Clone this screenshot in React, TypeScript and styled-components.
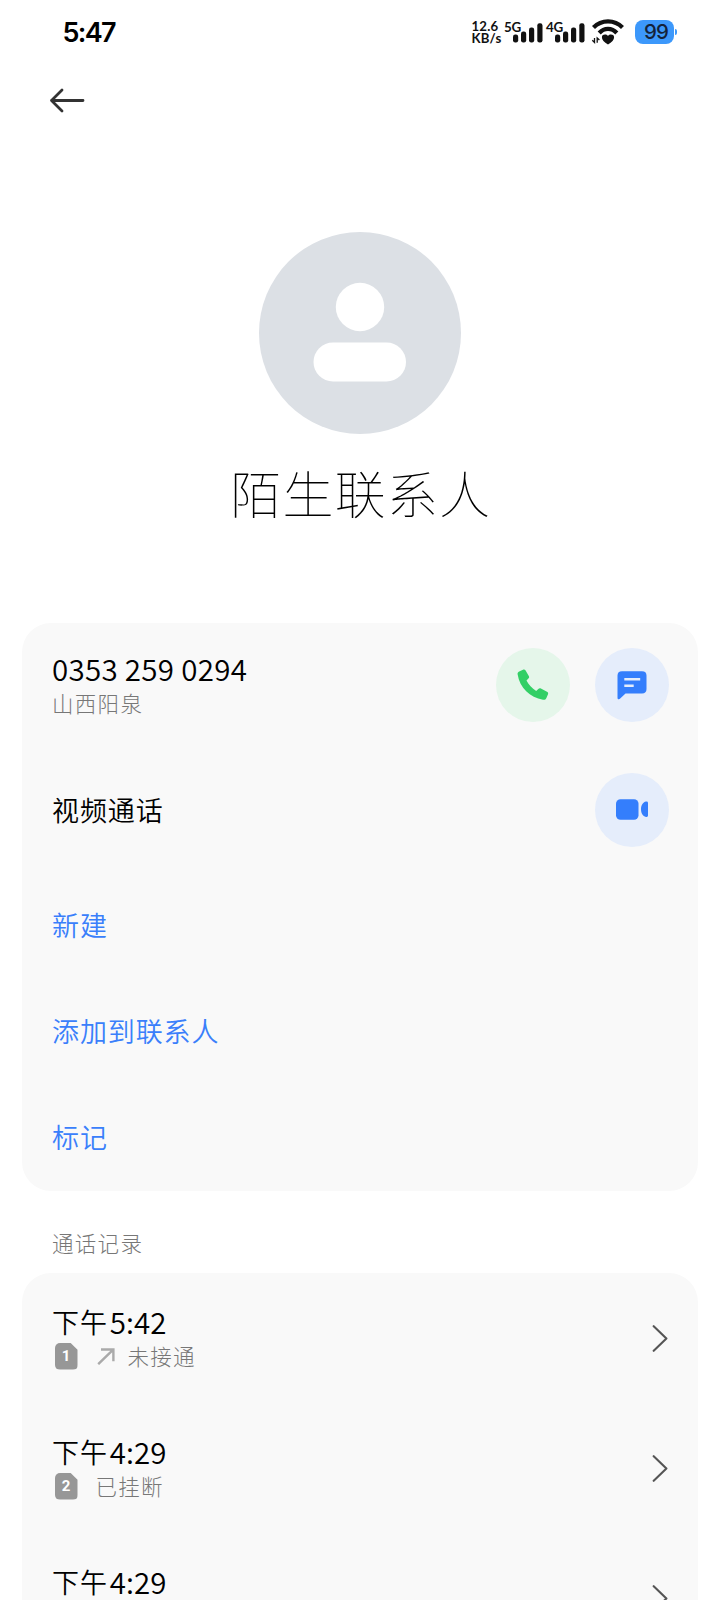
import React from "react";
import styled, { createGlobalStyle } from "styled-components";

const GlobalStyle = createGlobalStyle`
  * { box-sizing: border-box; }
  html, body { margin: 0; padding: 0; background: #fff; }
  body { height: 1600px; overflow: hidden; }
  svg { display: block; flex: none; }
  h1, h2, p { margin: 0; font-weight: inherit; }
`;

const cjk = `"Noto Sans CJK SC", sans-serif`;

const Screen = styled.main`
  width: 720px;
  height: 1600px;
  overflow: hidden;
  display: flex;
  flex-direction: column;
  background: #fff;
  color: #000;
  font-family: ${cjk};

  & > * { flex: none; }
`;

const StatusBar = styled.header`
  display: flex;
  align-items: center;
  height: 64px;
  padding: 0 43px 0 62.5px;
`;

const Clock = styled.span`
  flex: 1;
  padding-top: 1px;
  font: 600 27px/40px Inter, sans-serif;
  letter-spacing: -1.7px;
`;

const NetSpeed = styled.div`
  width: 32.5px;
  font: 700 13.2px/12.5px Lato, sans-serif;
  letter-spacing: 0.2px;
  white-space: nowrap;
  color: #111;

  span { display: block; }
`;

const Signal = styled.div`
  display: flex;
  align-items: flex-end;
  width: 42px;
  height: 23px;
`;

const SignalLabel = styled.span`
  width: 8px;
  height: 23px;
  font: 700 13.4px/12px Lato, sans-serif;
  letter-spacing: -0.3px;
  color: #111;
`;

const WifiSlot = styled.div`
  margin: 0 10px 0 3px;
`;

const Battery = styled.div`
  display: flex;
  align-items: center;
`;

const BatteryBody = styled.div`
  width: 39px;
  height: 24px;
  padding-left: 3px;
  border-radius: 8px;
  background: #3c98fb;
  color: #14233a;
  text-align: center;
  font: 500 20.5px/24px Inter, sans-serif;
  letter-spacing: -0.8px;
`;

const BatteryTip = styled.i`
  width: 2px;
  height: 6px;
  margin-left: 1px;
  border-radius: 0 2px 2px 0;
  background: #3c98fb;
`;

const TopBar = styled.nav`
  height: 168px;
  padding: 24px 0 0 49px;
`;

const Profile = styled.section`
  display: flex;
  flex-direction: column;
  align-items: center;
  height: 391px;
`;

const Name = styled.h1`
  margin-top: 21.5px;
  padding-left: 1.5px;
  font-size: 51px;
  line-height: 72px;
  font-weight: 100;
  letter-spacing: 1.2px;
`;

const Card = styled.section`
  margin: 0 22px;
  padding: 0 29.5px 0 30px;
  border-radius: 29px;
  background: #f9f9f9;
`;

const Row = styled.div<{ $height: number }>`
  display: flex;
  align-items: center;
  height: ${(p) => p.$height}px;
`;

const RowText = styled.div`
  flex: 1;
`;

const PhoneNumber = styled.p`
  font: 350 29.5px/34px ${cjk};
  letter-spacing: 0.3px;
  margin-bottom: 2px;
`;

const Label = styled.p<{ $link?: boolean }>`
  flex: 1;
  font-size: 27px;
  line-height: 40px;
  font-weight: 350;
  letter-spacing: 0.9px;
  color: ${(p) => (p.$link ? "#3a7ffb" : "#000")};
`;

const Muted = styled.p`
  font-size: 21.5px;
  line-height: 32px;
  font-weight: 300;
  letter-spacing: 1.3px;
  color: #777;
`;

const SectionTitle = styled.h2`
  height: 82.5px;
  padding: 36px 0 0 52px;
  font-size: 21.5px;
  line-height: 32px;
  font-weight: 300;
  letter-spacing: 1.3px;
  color: #777;
`;

const RoundButton = styled.button<{ $tone: "green" | "blue" }>`
  display: flex;
  align-items: center;
  justify-content: center;
  width: 74px;
  height: 74px;
  margin: 0 0 0 25px;
  padding: 0;
  border: 0;
  border-radius: 50%;
  background: ${(p) => (p.$tone === "green" ? "#e5f6ea" : "#e5edfb")};
`;

const CallTime = styled.p`
  display: flex;
  font-size: 27px;
  line-height: 36px;
  font-weight: 350;
  letter-spacing: 0.9px;
`;

const Digits = styled.span`
  margin-left: 2px;
  font: 350 29.5px/34px ${cjk};
  letter-spacing: 0;
`;

const CallMeta = styled.div`
  display: flex;
  align-items: center;
  height: 32px;
`;

const Sim = styled.span`
  display: flex;
  align-items: center;
  justify-content: center;
  width: 23px;
  height: 27px;
  margin: 0 18px 0 2.5px;
  border-radius: 5px;
  background: #979797;
  clip-path: polygon(0 0, 68% 0, 100% 27%, 100% 100%, 0 100%);
  color: #fff;
  font: 700 15px/27px Roboto, sans-serif;
`;

function SignalBars({ label }: { label: string }) {
  return (
    <Signal>
      <SignalLabel>{label}</SignalLabel>
      <svg width="32" height="21" viewBox="0 0 32 21" fill="#111">
        <rect x="1" y="11.5" width="5.2" height="8" rx="2.2" />
        <rect x="9" y="8.5" width="5.2" height="11" rx="2.2" />
        <rect x="17" y="4.5" width="5.2" height="15" rx="2.2" />
        <rect x="25.3" y=".3" width="5.2" height="19.2" rx="2.2" />
      </svg>
    </Signal>
  );
}

function WifiIcon() {
  return (
    <svg width="34" height="28" viewBox="0 0 34 28" fill="none" stroke="#111">
      <path d="M2.5 9.5C10.5 1.3 23.5 1.3 31.5 9.5" strokeWidth="4.2" />
      <path d="M8.2 15C13.2 9.5 20.8 9.5 25.8 15" strokeWidth="4.2" />
      <path d="M17 26.5C13.2 24.3 10.7 21.6 10.9 19C11.2 16.2 15.3 15.8 17 18C18.7 15.8 22.8 16.2 23.1 19C23.3 21.6 20.8 24.3 17 26.5Z" fill="#111" stroke="none" />
      <path d="M3.5 20V24.5L1.3 22.2M6.2 24.8V20L8.4 22" strokeWidth="1.3" />
    </svg>
  );
}

function BackIcon() {
  return (
    <svg width="38" height="26" viewBox="0 0 38 26" fill="none" stroke="#333" strokeWidth="2.8" strokeLinecap="round" strokeLinejoin="round">
      <path d="M34 12.5H2.5M13 2L2.5 12.5L13 23" />
    </svg>
  );
}

function Avatar() {
  return (
    <svg width="202" height="202" viewBox="0 0 202 202">
      <circle cx="101" cy="101" r="101" fill="#dce0e5" />
      <circle cx="101" cy="75" r="24.2" fill="#fff" />
      <rect x="54.5" y="110.5" width="92.5" height="39" rx="19.5" fill="#fff" />
    </svg>
  );
}

function PhoneIcon() {
  return (
    <svg width="32" height="32" viewBox="0 0 32 32" fill="#33cf66">
      <path d="M2.2 2.4L6 .7C7.1 .2 8 .6 8.6 1.5L11.8 6.9C12.4 8 12.2 8.8 11.4 9.6L9.5 11.6C11.6 15.7 15 19.4 19.2 21.9L21.3 20C22.1 19.3 22.9 19.1 23.9 19.6L30 22.7C31.1 23.3 31.4 24.1 31 25.2L29.4 29C28.8 30.5 27.7 31 26 30.8C13 28.7 2.7 18.8 .6 5.3C.4 3.9 .9 3 2.2 2.4Z" />
    </svg>
  );
}

function MessageIcon() {
  return (
    <svg width="30" height="30" viewBox="0 0 30 30" fill="none">
      <path d="M5 1.3H25C28 1.3 29.5 2.8 29.5 5.5V19C29.5 21.8 28 23.5 25 23.5H8.5L3.2 28.6C2 29.8 .5 29.3 .5 27.7V5.5C.5 2.8 2 1.3 5 1.3Z" fill="#347efc" />
      <path d="M7.3 9.2H23.2M7.3 15.7H16.7" stroke="#e5edfb" strokeWidth="2.6" />
    </svg>
  );
}

function VideoIcon() {
  return (
    <svg width="32" height="21" viewBox="0 0 32 21" fill="#347efc">
      <rect x="0" y=".3" width="22.5" height="20.4" rx="4.5" />
      <path d="M30 2.6Q32 2.2 32 4V16.6Q32 18.4 30 18C26.8 17.4 25 14 25 10.3C25 6.6 26.8 3.2 30 2.6Z" />
    </svg>
  );
}

function OutgoingIcon() {
  return (
    <svg width="32" height="18" viewBox="0 0 32 18" fill="none" stroke="#aaa" strokeWidth="2.4">
      <path d="M2.2 17.2L17.2 2.7M5 2.5H17.4V14.3" />
    </svg>
  );
}

function Chevron() {
  return (
    <svg width="17" height="28" viewBox="0 0 17 28" fill="none" stroke="#555" strokeWidth="2.1" strokeLinecap="round" strokeLinejoin="round">
      <path d="M1.7 2.2L14.4 14.5L1.7 26.8" />
    </svg>
  );
}

const links = ["新建", "添加到联系人", "标记"];

const calls = [
  { time: "5:42", sim: 1, outgoing: true, status: "未接通" },
  { time: "4:29", sim: 2, outgoing: false, status: "已挂断" },
  { time: "4:29", sim: 0, outgoing: false, status: "" },
];

export default function App() {
  return (
    <Screen>
      <GlobalStyle />
      <StatusBar>
        <Clock>5:47</Clock>
        <NetSpeed>
          <span>12.6</span>
          <span>KB/s</span>
        </NetSpeed>
        <SignalBars label="5G" />
        <SignalBars label="4G" />
        <WifiSlot>
          <WifiIcon />
        </WifiSlot>
        <Battery>
          <BatteryBody>99</BatteryBody>
          <BatteryTip />
        </Battery>
      </StatusBar>
      <TopBar>
        <BackIcon />
      </TopBar>
      <Profile>
        <Avatar />
        <Name>陌生联系人</Name>
      </Profile>
      <Card>
        <Row $height={124}>
          <RowText>
            <PhoneNumber>0353 259 0294</PhoneNumber>
            <Muted>山西阳泉</Muted>
          </RowText>
          <RoundButton $tone="green">
            <PhoneIcon />
          </RoundButton>
          <RoundButton $tone="blue">
            <MessageIcon />
          </RoundButton>
        </Row>
        <Row $height={125}>
          <Label>视频通话</Label>
          <RoundButton $tone="blue">
            <VideoIcon />
          </RoundButton>
        </Row>
        {links.map((text) => (
          <Row $height={106.2} key={text}>
            <Label $link>{text}</Label>
          </Row>
        ))}
      </Card>
      <SectionTitle>通话记录</SectionTitle>
      <Card>
        {calls.map((call, i) => (
          <Row $height={130} key={i}>
            <RowText>
              <CallTime>
                下午<Digits>{call.time}</Digits>
              </CallTime>
              <CallMeta>
                {call.sim > 0 && <Sim>{call.sim}</Sim>}
                {call.outgoing && <OutgoingIcon />}
                <Muted>{call.status}</Muted>
              </CallMeta>
            </RowText>
            <Chevron />
          </Row>
        ))}
      </Card>
    </Screen>
  );
}
